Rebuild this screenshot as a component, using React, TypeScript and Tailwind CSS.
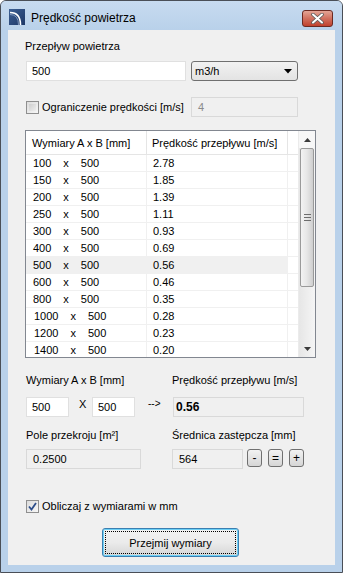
import React from "react";

const rows: [string, string][] = [
  ["100", "2.78"],
  ["150", "1.85"],
  ["200", "1.39"],
  ["250", "1.11"],
  ["300", "0.93"],
  ["400", "0.69"],
  ["500", "0.56"],
  ["600", "0.46"],
  ["800", "0.35"],
  ["1000", "0.28"],
  ["1200", "0.23"],
  ["1400", "0.20"],
];

function SmallBtn({ label }: { label: string }) {
  return (
    <div className="w-[15px] h-[18px] rounded-[3px] border border-[#707070] bg-gradient-to-b from-[#f2f2f2] to-[#d6d6d6] flex items-center justify-center text-[12px] leading-none text-black">
      {label}
    </div>
  );
}

export default function App() {
  return (
    <div
      className="w-[343px] h-[573px] bg-white whitespace-nowrap"
      style={{ fontFamily: '"Liberation Sans", Arial, sans-serif' }}
    >
      <div className="w-[343px] h-[573px] flex flex-col border border-[#4a4f57] rounded-t-[6px] bg-[#b9d1ea] overflow-hidden">
        {/* title bar */}
        <div className="h-[29px] flex items-start bg-gradient-to-b from-[#c7dbf0] to-[#b9d1ea] relative">
          <div className="ml-[8px] mt-[8px] w-[16px] h-[16px]">
            <svg width="16" height="16" viewBox="0 0 16 16">
              <defs>
                <linearGradient id="ig" x1="0" y1="0" x2="1" y2="1">
                  <stop offset="0" stopColor="#3c5f93" />
                  <stop offset="1" stopColor="#1d3766" />
                </linearGradient>
              </defs>
              <rect x="0" y="0" width="16" height="16" fill="url(#ig)" />
              <path d="M1 3.5 Q 11.5 3.5 11.5 16" stroke="#ffffff" strokeWidth="1.6" fill="none" />
              <path d="M1 5.5 Q 9.5 5.5 9.5 16" stroke="#8fa7c9" strokeWidth="0.8" fill="none" />
            </svg>
          </div>
          <div className="ml-[6px] mt-[9px] text-[12px] leading-[16px] text-black">Prędkość powietrza</div>
          <div className="ml-auto mr-[9px] mt-[9px] w-[31px] h-[17px] rounded-[3px] border border-[#6b2a22] bg-gradient-to-b from-[#e3a597] via-[#d0705f] to-[#c0402c] flex items-center justify-center">
            <svg width="13" height="11" viewBox="0 0 13 11">
              <path d="M2 1.5 L11 9.5 M11 1.5 L2 9.5" stroke="#5a5a5a" strokeWidth="3.6" strokeLinecap="round" />
              <path d="M2 1.5 L11 9.5 M11 1.5 L2 9.5" stroke="#ffffff" strokeWidth="2" strokeLinecap="round" />
            </svg>
          </div>
        </div>

        {/* client */}
        <div className="mx-[7px] h-[535px] bg-[#f0f0f0] flex flex-col text-[11px] leading-[16px] text-black">
          <div className="ml-[17px] mt-[8px]">Przepływ powietrza</div>

          <div className="flex mt-[7px] ml-[18px] h-[20px]">
            <div className="w-[160px] h-[20px] bg-white border border-[#e0e0e0] pl-[5px] flex items-center">500</div>
            <div className="ml-[5px] w-[107px] h-[20px] rounded-[3px] border border-[#707070] bg-gradient-to-b from-[#f2f2f2] to-[#e3e3e3] pl-[3px] flex items-center">
              <span>m3/h</span>
              <svg className="ml-auto mr-[5px]" width="8" height="5" viewBox="0 0 8 5">
                <path d="M0 0 H8 L4 4.5 Z" fill="#000" />
              </svg>
            </div>
          </div>

          <div className="flex mt-[16px] ml-[18px] h-[20px]">
            <div className="flex items-center w-[165px] shrink-0">
              <div className="w-[13px] h-[13px] border border-[#8f8f8f] bg-gradient-to-br from-[#dcdcdc] to-[#f7f7f7] p-[2px] shrink-0">
                <div className="w-full h-full bg-gradient-to-br from-[#cfcfcf] to-[#eeeeee]" />
              </div>
              <span className="ml-[3px]">Ograniczenie prędkości [m/s]</span>
            </div>
            <div className="w-[107px] h-[20px] border border-[#d9d9d9] bg-[#f0f0f0] pl-[6px] flex items-center text-[#8a8a8a]">4</div>
          </div>

          {/* table */}
          <div className="mt-[13px] ml-[17px] w-[291px] h-[228px] border border-[#828790] bg-white flex overflow-hidden">
            <div className="flex-1 flex flex-col">
              <div className="h-[24px] flex border-b border-[#e5e5e5] shrink-0">
                <div className="w-[121px] pl-[6px] flex items-center border-r border-[#e5e5e5]">Wymiary A x B [mm]</div>
                <div className="w-[141px] pl-[5px] flex items-center border-r border-[#e5e5e5]">Prędkość przepływu [m/s]</div>
                <div className="flex-1" />
              </div>
              {rows.map(([a, v], i) => (
                <div key={i} className="h-[17px] flex shrink-0">
                  <div className={"w-[262px] flex " + (a === "500" ? "bg-[#f0f0f0]" : "")}>
                    <div className={"w-[121px] flex items-center border-r border-b border-[#f0f0f0] " + (a.length === 4 ? "pl-[8px]" : "pl-[7px]")}>
                      <span>{a}</span>
                      <span className="ml-[12px]">x</span>
                      <span className="ml-[12px]">500</span>
                    </div>
                    <div className="w-[141px] pl-[6px] flex items-center border-r border-b border-[#f0f0f0]">{v}</div>
                  </div>
                  <div className="flex-1 border-b border-[#f0f0f0]" />
                </div>
              ))}
            </div>
            {/* scrollbar */}
            <div className="w-[17px] flex flex-col bg-gradient-to-r from-[#e6e6e6] to-[#f5f5f5] border-l border-[#ebebeb]">
              <div className="h-[17px] flex items-center justify-center bg-[#f7f7f7]">
                <svg width="7" height="4" viewBox="0 0 7 4"><path d="M0 4 H7 L3.5 0 Z" fill="#3a3a3a" /></svg>
              </div>
              <div className="mx-[1px] h-[139px] rounded-[2px] border border-[#9a9a9a] bg-gradient-to-r from-[#f3f3f3] via-[#e6e6e6] to-[#cfcfcf] flex flex-col items-center justify-center gap-[2px]">
                <div className="w-[7px] h-[1px] bg-[#6d6d6d]" />
                <div className="w-[7px] h-[1px] bg-[#6d6d6d]" />
                <div className="w-[7px] h-[1px] bg-[#6d6d6d]" />
              </div>
              <div className="flex-1" />
              <div className="h-[17px] flex items-center justify-center">
                <svg width="7" height="4" viewBox="0 0 7 4"><path d="M0 0 H7 L3.5 4 Z" fill="#3a3a3a" /></svg>
              </div>
            </div>
          </div>

          {/* lower section */}
          <div className="flex mt-[14px] ml-[18px]">
            <div className="w-[146px]">Wymiary A x B [mm]</div>
            <div>Prędkość przepływu [m/s]</div>
          </div>
          <div className="flex mt-[9px] ml-[18px] h-[20px]">
            <div className="w-[43px] h-[20px] bg-white border border-[#e0e0e0] pl-[5px] flex items-center">500</div>
            <div className="ml-[10px] w-[13px] h-[16px] leading-[14px]">X</div>
            <div className="w-[43px] h-[20px] bg-white border border-[#e0e0e0] pl-[5px] flex items-center">500</div>
            <div className="ml-[13px] w-[25px] h-[16px] leading-[14px] text-[10px]">--&gt;</div>
            <div className="w-[131px] h-[20px] border border-[#d9d9d9] bg-[#f0f0f0] pl-[2px] flex items-center font-bold text-[12px]">0.56</div>
          </div>
          <div className="flex mt-[10px] ml-[18px]">
            <div className="w-[146px]">Pole przekroju [m²]</div>
            <div>Średnica zastępcza [mm]</div>
          </div>
          <div className="flex mt-[6px] ml-[18px] h-[20px] items-start">
            <div className="w-[115px] h-[20px] border border-[#d9d9d9] bg-[#f0f0f0] pl-[6px] flex items-center">0.2500</div>
            <div className="ml-[31px] w-[71px] h-[20px] border border-[#d9d9d9] bg-[#f0f0f0] pl-[6px] flex items-center">564</div>
            <div className="ml-[4px] flex gap-[6px]">
              <SmallBtn label="-" />
              <SmallBtn label="=" />
              <SmallBtn label="+" />
            </div>
          </div>

          <div className="flex items-center mt-[29px] ml-[18px]">
            <div className="w-[13px] h-[13px] border border-[#8f8f8f] bg-gradient-to-br from-[#dcdcdc] to-[#f7f7f7] flex items-center justify-center">
              <svg width="9" height="9" viewBox="0 0 9 9">
                <path d="M1 4.5 L3.5 7.5 L8 1" stroke="#2c4d8a" strokeWidth="1.8" fill="none" />
              </svg>
            </div>
            <span className="ml-[3px]">Obliczaj z wymiarami w mm</span>
          </div>

          <div className="mt-[14px] ml-[94px] w-[137px] h-[29px] rounded-[3px] border border-[#3c7fb1] bg-gradient-to-b from-[#f2f2f2] via-[#ebebeb] to-[#d6d6d6] p-[2px] shadow-[inset_0_0_0_1px_#6cd0f6]">
            <div className="w-full h-full border border-dotted border-black flex items-center justify-center text-[11px]">
              Przejmij wymiary
            </div>
          </div>
        </div>
        <div className="flex-1" />
      </div>
    </div>
  );
}
